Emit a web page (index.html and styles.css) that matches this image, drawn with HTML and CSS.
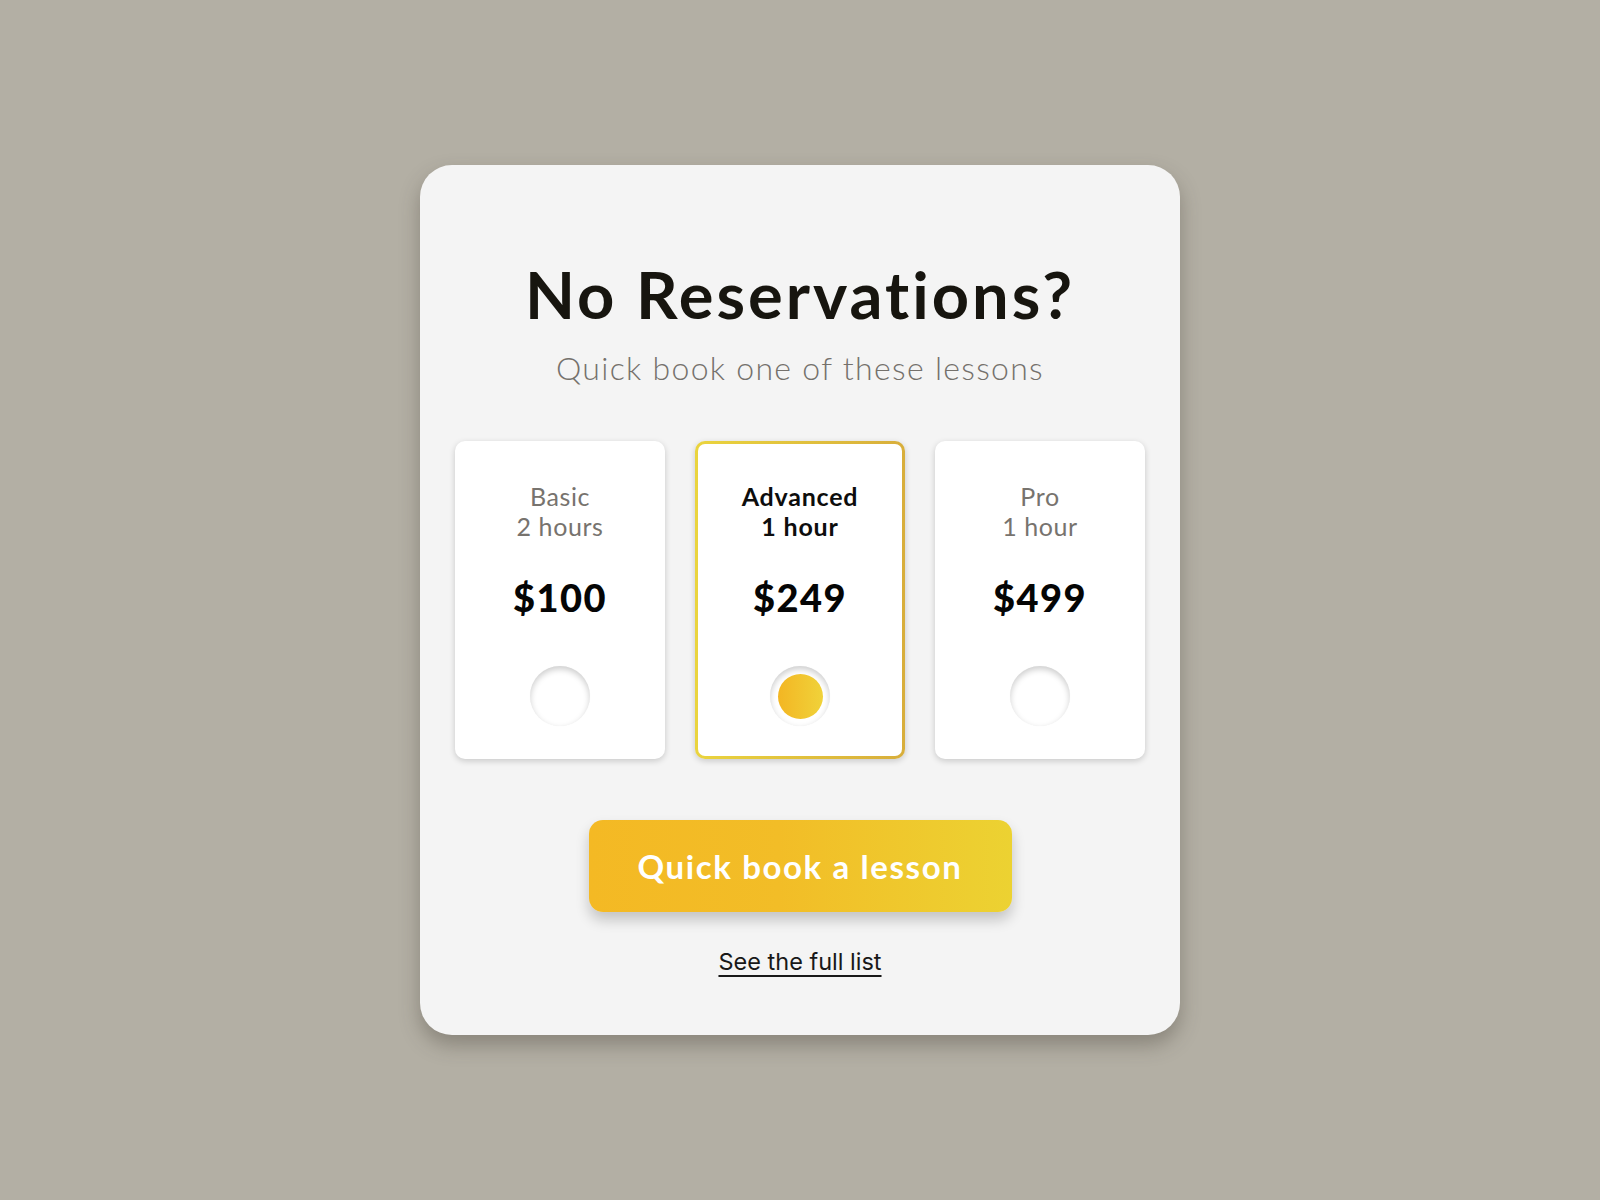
FILE: index.html
```html
<!DOCTYPE html>
<html lang="en">
<head>
<meta charset="utf-8">
<title>No Reservations?</title>
<link rel="stylesheet" href="styles.css">
</head>
<body>
<main class="page">
  <section class="panel">
    <h1 class="title">No Reservations?</h1>
    <p class="subtitle">Quick book one of these lessons</p>
    <div class="options">
      <label class="option">
        <span class="option-name">Basic<br>2 hours</span>
        <span class="price">$100</span>
        <span class="radio"></span>
      </label>
      <label class="option selected">
        <span class="option-name">Advanced<br>1 hour</span>
        <span class="price">$249</span>
        <span class="radio"><span class="dot"></span></span>
      </label>
      <label class="option">
        <span class="option-name">Pro<br>1 hour</span>
        <span class="price">$499</span>
        <span class="radio"></span>
      </label>
    </div>
    <button class="cta">Quick book a lesson</button>
    <a class="link" href="#">See the full list</a>
  </section>
</main>
</body>
</html>
```

FILE: styles.css
```css
html, body {
  margin: 0;
  padding: 0;
}
body {
  background: #b3afa4;
  font-family: "Lato", "Inter", sans-serif;
}
.page {
  height: 1200px;
  display: flex;
  align-items: center;
  justify-content: center;
}
.panel {
  width: 760px;
  height: 870px;
  box-sizing: border-box;
  background: #f4f4f4;
  border-radius: 32px;
  box-shadow: 0 10px 20px rgba(60, 55, 45, 0.35);
  padding: 89px 35px 0;
  display: flex;
  flex-direction: column;
  align-items: center;
}
.title {
  margin: 0;
  font-size: 65px;
  line-height: 80px;
  font-weight: 700;
  color: #17150f;
  letter-spacing: 3px;
}
.subtitle {
  margin: 14px 0 0;
  font-size: 32px;
  line-height: 40px;
  font-weight: 300;
  color: #75716c;
  letter-spacing: 1.3px;
}
.options {
  margin-top: 53px;
  display: grid;
  grid-template-columns: repeat(3, 210px);
  gap: 30px;
}
.option {
  height: 318px;
  box-sizing: border-box;
  background: #fff;
  border-radius: 10px;
  box-shadow: 0 2px 6px rgba(0, 0, 0, 0.18);
  display: flex;
  flex-direction: column;
  align-items: center;
  padding-top: 37px;
  border: 3px solid transparent;
}
.option.selected {
  background: linear-gradient(#fff, #fff) padding-box,
              linear-gradient(90deg, #ead43e, #d8ae3b) border-box;
}
.option-name {
  text-align: center;
  font-size: 25px;
  line-height: 30px;
  color: #77736e;
  font-weight: 400;
  letter-spacing: 0.6px;
}
.selected .option-name {
  color: #0d0d0d;
  font-weight: 700;
  letter-spacing: 0.8px;
}
.price {
  margin-top: 34px;
  font-size: 38px;
  line-height: 44px;
  font-weight: 900;
  color: #050505;
  letter-spacing: 1.5px;
}
.radio {
  margin-top: 47px;
  width: 60px;
  height: 60px;
  border-radius: 50%;
  background: #fff;
  box-shadow: inset 0 3px 6px rgba(0, 0, 0, 0.2), 0 0 1px rgba(0, 0, 0, 0.06);
  display: flex;
  align-items: center;
  justify-content: center;
}
.dot {
  width: 45px;
  height: 45px;
  border-radius: 50%;
  background: linear-gradient(90deg, #f3b623, #f0d23a);
}
.cta {
  margin-top: 61px;
  width: 423px;
  height: 92px;
  border: none;
  border-radius: 14px;
  background: linear-gradient(90deg, #f4b924, #f2bd27 45%, #ecd232);
  box-shadow: 0 8px 14px rgba(0, 0, 0, 0.2);
  color: #fff;
  font-family: "Lato", "Inter", sans-serif;
  font-size: 33px;
  font-weight: 700;
  letter-spacing: 1.6px;
}
.link {
  margin-top: 35px;
  font-family: "Inter", sans-serif;
  font-size: 23.5px;
  line-height: 30px;
  color: #181818;
  text-decoration: underline;
  text-underline-offset: 5px;
  text-decoration-thickness: 1.5px;
}
```
